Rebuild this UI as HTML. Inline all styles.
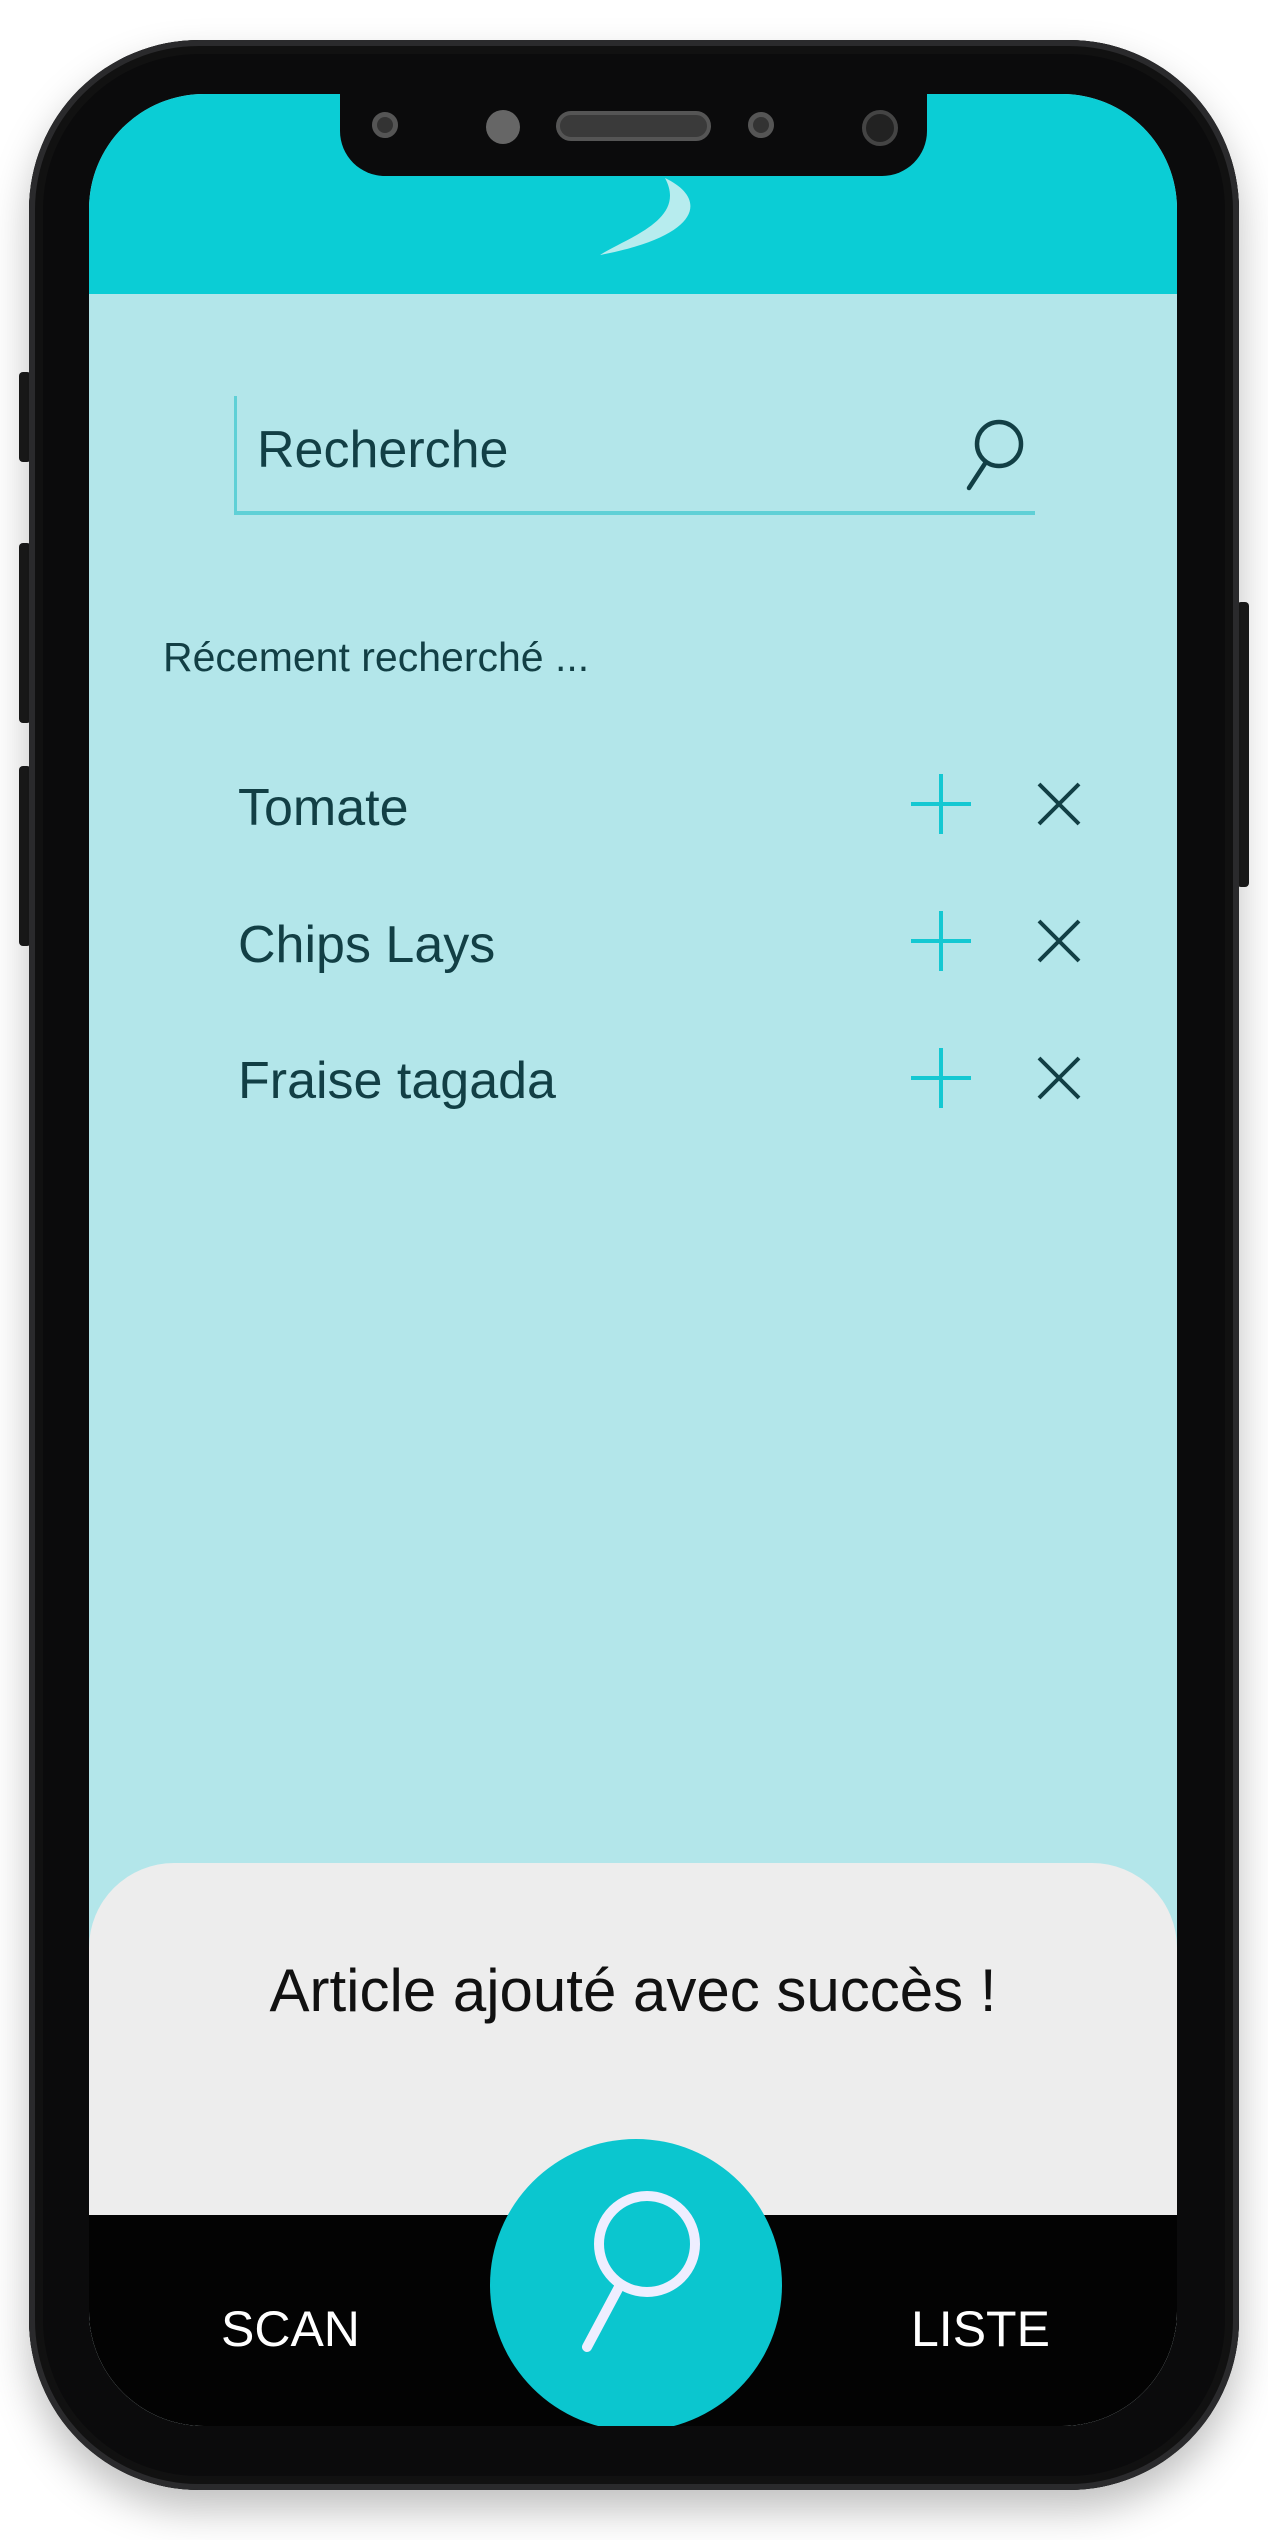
<!DOCTYPE html>
<html><head><meta charset="utf-8"><style>
*{margin:0;padding:0;box-sizing:border-box}
body{width:1268px;height:2540px;background:#fff;position:relative;overflow:hidden;font-family:"Liberation Sans",sans-serif}
.abs{position:absolute}
.phone{left:29px;top:40px;width:1210px;height:2450px;background:#0b0b0c;border-radius:170px;box-shadow:0 20px 40px rgba(0,0,0,.25),inset 0 0 0 6px #2a2a2c,inset 0 0 0 14px #111}
.btn{background:#1a1a1a;border-radius:4px;width:12px}
.screen{left:89px;top:94px;width:1088px;height:2332px;border-radius:115px;overflow:hidden;background:#b3e6ea}
.t{color:#123f45;white-space:nowrap}
</style></head><body>
<div class="abs btn" style="left:19px;top:372px;height:90px"></div>
<div class="abs btn" style="left:19px;top:543px;height:180px"></div>
<div class="abs btn" style="left:19px;top:766px;height:180px"></div>
<div class="abs btn" style="left:1237px;top:602px;height:285px"></div>
<div class="abs phone"></div>
<div class="abs screen">
  <div class="abs" style="left:0;top:0;width:1088px;height:200px;background:#0bcdd5"></div>
  <svg class="abs" style="left:500px;top:80px" width="130" height="100" viewBox="0 0 130 100"><path d="M76 4 C120 25 112 62 11 81 C42 62 98 45 76 4Z" fill="#b7ecee"/></svg>
  <div class="abs" style="left:145px;top:302px;width:3px;height:118px;background:#5fd0d6"></div>
  <div class="abs" style="left:145px;top:417px;width:801px;height:4px;background:#5fd0d6"></div>
  <div class="abs t" style="left:168px;top:326px;font-size:52px">Recherche</div>
  <svg class="abs" style="left:870px;top:320px" width="70" height="80" viewBox="0 0 70 80"><circle cx="40" cy="30" r="22" fill="none" stroke="#123f45" stroke-width="4.5"/><path d="M27 48 L10 74" stroke="#123f45" stroke-width="4.5" stroke-linecap="round"/></svg>
  <div class="abs t" style="left:74px;top:540px;font-size:41px">Récement recherché ...</div>
  <div class="abs t" style="left:149px;top:684px;font-size:52px">Tomate</div>
  <div class="abs t" style="left:149px;top:821px;font-size:52px">Chips Lays</div>
  <div class="abs t" style="left:149px;top:957px;font-size:52px">Fraise tagada</div>
  <svg class="abs" style="left:822px;top:680px" width="200" height="460" viewBox="0 0 200 460">
    <g stroke="#14c8d2" stroke-width="4"><path d="M30 0V60M0 30H60"/><path d="M30 137V197M0 167H60"/><path d="M30 274V334M0 304H60"/></g>
    <g stroke="#123f45" stroke-width="4"><path d="M128 10L168 50M168 10L128 50"/><path d="M128 147L168 187M168 147L128 187"/><path d="M128 284L168 324M168 284L128 324"/></g>
  </svg>
  <div class="abs" style="left:0;top:1769px;width:1088px;height:600px;background:#ededed;border-radius:85px 85px 0 0"></div>
  <div class="abs" style="left:0;top:1862px;width:1088px;text-align:center;font-size:60px;color:#111">Article ajouté avec succès !</div>
  <div class="abs" style="left:0;top:2121px;width:1088px;height:220px;background:#030303"></div>
  <div class="abs" style="left:132px;top:2206px;font-size:50px;color:#fff">SCAN</div>
  <div class="abs" style="left:822px;top:2206px;font-size:50px;color:#fff">LISTE</div>
  <div class="abs" style="left:401px;top:2045px;width:292px;height:292px;border-radius:50%;background:#0bc6cf"></div>
  <svg class="abs" style="left:480px;top:2095px" width="140" height="180" viewBox="0 0 140 180"><circle cx="78" cy="55" r="48" fill="none" stroke="#eef" stroke-width="10"/><path d="M50 98 L18 158" stroke="#eef" stroke-width="10" stroke-linecap="round"/></svg>
</div>
<div class="abs" style="left:340px;top:90px;width:587px;height:86px;background:#0b0b0c;border-radius:0 0 45px 45px"></div>
<div class="abs" style="left:372px;top:112px;width:26px;height:26px;border-radius:50%;background:#333;border:5px solid #555"></div>
<div class="abs" style="left:486px;top:110px;width:34px;height:34px;border-radius:50%;background:#666"></div>
<div class="abs" style="left:556px;top:111px;width:155px;height:30px;border-radius:15px;background:#3a3a3a;border:4px solid #555"></div>
<div class="abs" style="left:748px;top:112px;width:26px;height:26px;border-radius:50%;background:#333;border:5px solid #555"></div>
<div class="abs" style="left:862px;top:110px;width:36px;height:36px;border-radius:50%;background:#222;border:4px solid #444"></div>
</body></html>
